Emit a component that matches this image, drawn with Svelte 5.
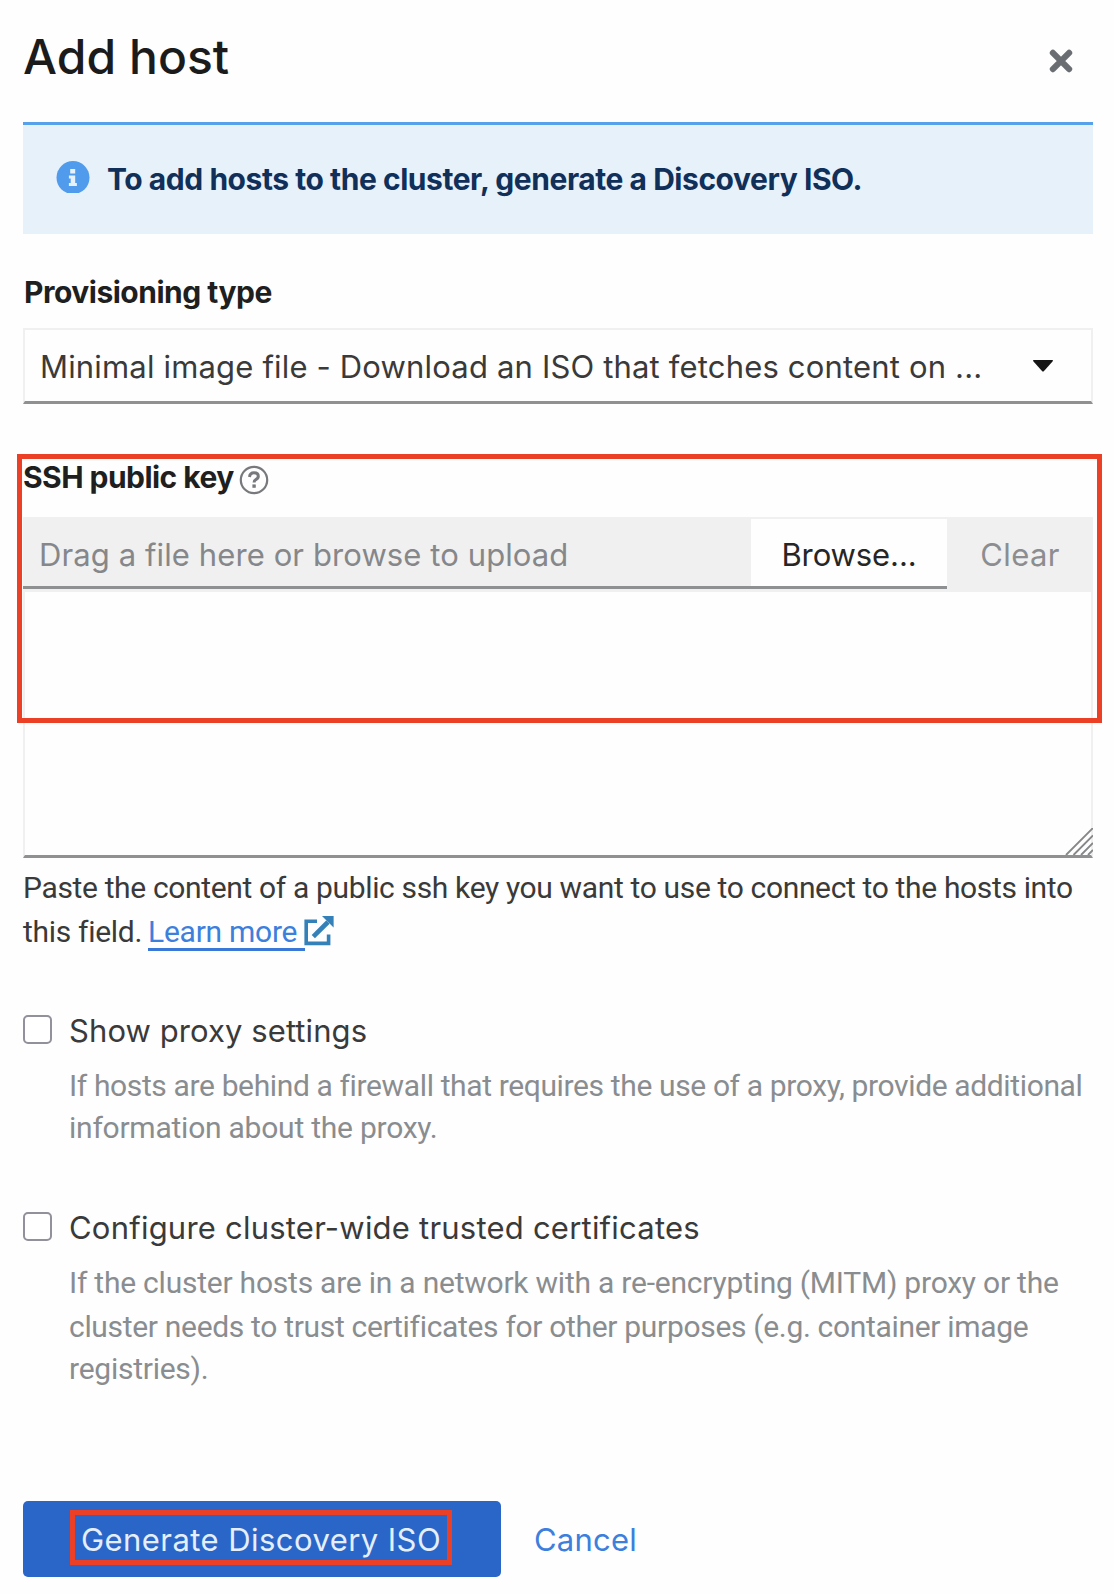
<script>
  let proxy = $state(false);
  let certs = $state(false);
</script>

<main class="modal">
  <header class="head">
    <h1>Add host</h1>
    <button class="close" aria-label="Close">
      <svg width="24" height="24" viewBox="0 0 24 24"><path d="M3.9 3.9 20.1 20.1M20.1 3.9 3.9 20.1" /></svg>
    </button>
  </header>

  <section class="alert">
    <svg class="info" width="34" height="32" viewBox="0 0 34 32">
      <circle cx="17" cy="16.6" r="16.5" fill="#519bed" />
      <path d="M14.2 8h5v4.6h-5zM12.9 14.6h6.3v7.4h1.7v3h-8v-3h1.8v-4.4h-1.8z" fill="#e7f1fa" />
    </svg>
    <strong>To add hosts to the cluster, generate a Discovery ISO.</strong>
  </section>

  <section class="field">
    <h2 class="label prov">Provisioning type</h2>
    <div class="select">
      <span>Minimal image file - Download an ISO that fetches content on ...</span>
      <svg width="20" height="12" viewBox="0 0 20 12"><path d="M.5 0h19q.8.6 0 1.6L11 11q-1 1-2 0L.5 1.6Q-.3.6.5 0z" fill="#151515" /></svg>
    </div>
  </section>

  <section class="ssh">
    <div class="label-row">
      <h2 class="label key">SSH public key</h2>
      <svg class="help" width="30" height="30" viewBox="0 0 30 30" fill="none" stroke="#77797c">
        <circle cx="15" cy="15" r="13.2" stroke-width="2.2" />
        <path d="M10.5 12q.5-4.2 4.5-4.2 4.3 0 4.3 3.5 0 2.1-2.5 3.4-1.7.9-1.7 2.7" stroke-width="3" />
        <path d="M15.1 19.4v3.4" stroke-width="3.4" />
      </svg>
    </div>
    <div class="file">
      <div class="filename">Drag a file here or browse to upload</div>
      <button class="browse">Browse...</button>
      <button class="clear">Clear</button>
    </div>
    <div class="area">
      <svg width="28" height="27" viewBox="0 0 28 27" stroke="#858789" stroke-width="1.9">
        <path d="M1 27 28 0M8.5 27 28 7.5M16 27 28 15M23 27l5-5" />
      </svg>
    </div>
    <div class="highlight"></div>
  </section>

  <p class="note">
    <span class="line paste">Paste the content of a public ssh key you want to use to connect to the hosts into</span>
    <span class="line second">
      <span class="tf">this field.</span>
      <a href="#learn">Learn more</a>
      <svg width="30" height="30" viewBox="0 0 30 30" fill="none" stroke="#3480b8">
        <path d="M13 5.2H2.2v22.2h22.4v-9" stroke-width="3.6" />
        <path d="M9.3 20.7 24 6" stroke-width="4.6" />
        <path d="M18 0H29.6v11.6z" fill="#3480b8" stroke="none" />
      </svg>
    </span>
  </p>

  <section class="option one">
    <input type="checkbox" bind:checked={proxy} aria-label="Show proxy settings" />
    <div>
      <div class="name show">Show proxy settings</div>
      <p class="desc">
        <span class="line l1">If hosts are behind a firewall that requires the use of a proxy, provide additional</span>
        <span class="line l2">information about the proxy.</span>
      </p>
    </div>
  </section>

  <section class="option two">
    <input type="checkbox" bind:checked={certs} aria-label="Configure cluster-wide trusted certificates" />
    <div>
      <div class="name">Configure cluster-wide trusted certificates</div>
      <p class="desc">
        <span class="line l3">If the cluster hosts are in a network with a re-encrypting (MITM) proxy or the</span>
        <span class="line l4">cluster needs to trust certificates for other purposes (e.g. container image</span>
        <span class="line l5">registries).</span>
      </p>
    </div>
  </section>

  <footer>
    <button class="primary"><span>Generate Discovery ISO</span></button>
    <button class="cancel">Cancel</button>
  </footer>
</main>

<style>
  :global(body) { background: #fefefe; }
  .modal {
    box-sizing: border-box;
    width: 1114px;
    height: 1594px;
    padding: 0 21px 0 23px;
    overflow: hidden;
    font: 400 31px/44px Inter, "Liberation Sans", sans-serif;
    color: #3a3a3a;
    white-space: nowrap;
    display: flex;
    flex-direction: column;
  }
  h1, h2, p { margin: 0; }
  svg { display: block; flex: none; }
  button { font: inherit; margin: 0; padding: 0; border: 0; background: none; color: inherit; }

  .head { height: 122px; display: flex; justify-content: space-between; align-items: flex-start; }
  h1 { font-size: 48px; font-weight: 500; line-height: 114px; letter-spacing: .05px; color: #1b1b1b; }
  .close { margin: 49px 20px 0 0; }
  .close path { stroke: #6a6e73; stroke-width: 6.2; stroke-linecap: round; }

  .alert {
    box-sizing: border-box;
    height: 112px;
    border-top: 3px solid #57a0ea;
    background: #e7f1fa;
    display: flex;
    padding: 32px 0 0 33px;
    gap: 17px;
    color: #10305a;
    font-size: 30px;
  }
  .alert .info { margin-top: 4px; }
  .alert strong { font-weight: 700; letter-spacing: -.45px; }

  .label { font-size: 30px; font-weight: 700; color: #1f1f1f; }
  .prov { margin-top: 36px; padding-left: 1px; letter-spacing: -.5px; }
  .select {
    box-sizing: border-box;
    height: 76px;
    margin-top: 14px;
    padding: 0 38px 0 15px;
    border: 2px solid #f0f0f0;
    border-bottom: 3px solid #8e9092;
    display: flex;
    justify-content: space-between;
    align-items: center;
  }
  .select span { letter-spacing: .17px; padding-top: 2px; }

  .ssh { position: relative; margin-top: 50px; }
  .label-row { height: 63px; display: flex; gap: 5px; }
  .key { padding-top: 1px; letter-spacing: -.55px; }
  .help { margin-top: 11px; }
  .file { height: 75px; display: flex; background: #f0f0f0; }
  .filename, .browse { box-sizing: border-box; height: 72px; border-bottom: 3px solid #8e9092; line-height: 76px; }
  .filename { width: 728px; padding-left: 16px; color: #85878a; letter-spacing: .1px; }
  .browse { width: 196px; height: 70px; margin-top: 2px; line-height: 72px; letter-spacing: -.1px; background: #fefefe; color: #262626; }
  .clear { flex: 1; line-height: 75px; letter-spacing: .4px; color: #8b8d90; }
  .area {
    box-sizing: border-box;
    height: 266px;
    border: 2px solid #f0f0f0;
    border-top: 0;
    border-bottom: 3px solid #8e9092;
    display: flex;
    justify-content: flex-end;
    align-items: flex-end;
  }
  .area svg { margin-right: -2px; }
  .highlight {
    position: absolute;
    box-sizing: border-box;
    left: -6px;
    right: -9px;
    top: 0;
    height: 269px;
    border: 5px solid #ec4026;
  }

  .line { display: flex; height: 44px; line-height: 44px; }
  .note, .desc { font-family: Roboto, "Liberation Sans", sans-serif; font-size: 30px; }
  .note { margin-top: 8px; }
  .paste { letter-spacing: -.35px; }
  .tf { letter-spacing: -.3px; width: 125px; }
  a { box-sizing: border-box; width: 157px; height: 41px; letter-spacing: -.25px; color: #3c7fdc; border-bottom: 3px solid #3a78d8; text-decoration: none; }
  .second svg { margin: 6px 0 0 -1px; }

  .option { display: flex; gap: 17px; margin-top: 53px; }
  .two { margin-top: 54px; }
  input { appearance: none; box-sizing: border-box; width: 29px; height: 29px; margin: 8px 0 0; border: 2px solid #91909b; border-radius: 5px; background: #fff; }
  .name { letter-spacing: .22px; padding-top: 2px; margin-bottom: 11px; }
  .show { letter-spacing: .08px; }
  .desc { color: #8a8d90; }
  .l1 { letter-spacing: -.37px; height: 42px; }
  .l2 { letter-spacing: -.24px; }
  .l3 { letter-spacing: -.23px; }
  .l4 { letter-spacing: -.32px; height: 42px; }
  .l5 { letter-spacing: -.25px; }

  footer { display: flex; margin-top: 110px; height: 76px; }
  .primary { width: 478px; border-radius: 5px; background: #2a66c8; color: #e4effb; display: flex; }
  .primary span {
    box-sizing: border-box;
    width: 382px;
    height: 55px;
    margin: 9px 0 0 47px;
    border: 5px solid #ec4026;
    line-height: 50px;
    letter-spacing: .45px;
  }
  .cancel { margin-left: 33px; line-height: 78px; letter-spacing: .2px; color: #3c7fdc; }
</style>
